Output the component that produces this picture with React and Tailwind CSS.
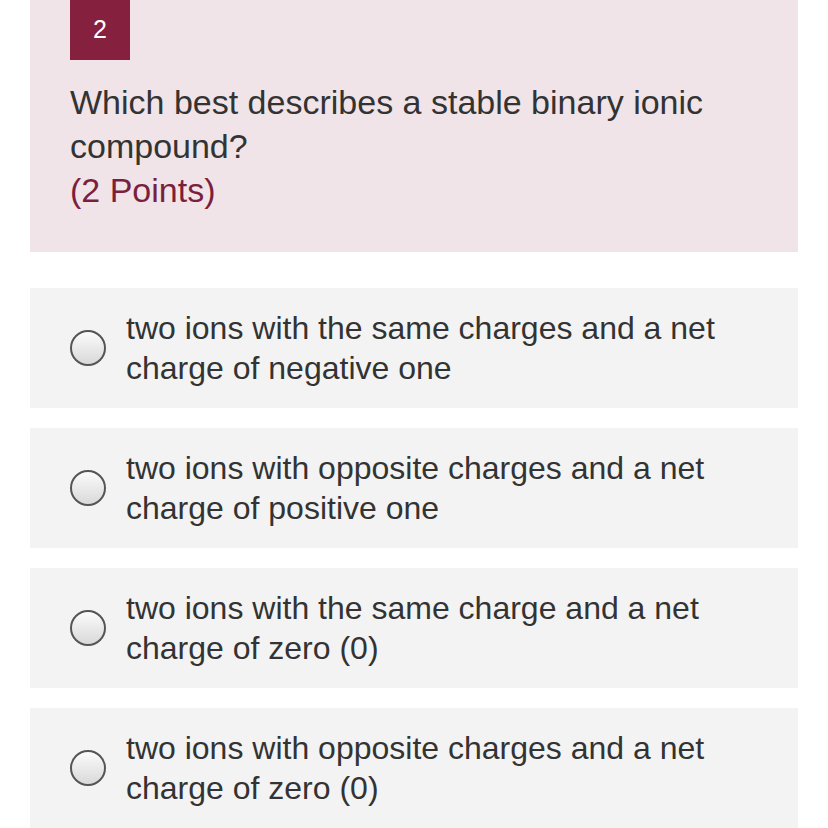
const options = [
  "two ions with the same charges and a net charge of negative one",
  "two ions with opposite charges and a net charge of positive one",
  "two ions with the same charge and a net charge of zero (0)",
  "two ions with opposite charges and a net charge of zero (0)",
];

const Radio = () => (
  <div className="w-[36px] h-[36px] shrink-0 rounded-full border-2 border-[#555] bg-gradient-to-b from-[#fbfbfb] to-[#d9d9d9]" />
);

export default function App() {
  return (
    <div className="w-[828px] h-[828px] overflow-hidden bg-white font-['Liberation_Sans',Arial,sans-serif]">
      <div className="mx-[30px] bg-[#f0e4e8] px-[40px] pb-[40px]">
        <div className="w-[60px] h-[60px] bg-[#85203f] text-white text-[25px] flex items-center justify-center">
          2
        </div>
        <div className="mt-[20px] text-[34px] leading-[44px] text-[#333]">
          <div className="pr-[40px]">Which best describes a stable binary ionic compound?</div>
          <div className="text-[#7a1f3d]">(2 Points)</div>
        </div>
      </div>

      <div className="mx-[30px] mt-[36px] flex flex-col gap-[20px]">
        {options.map((opt, i) => (
          <div key={i} className="bg-[#f3f3f3] h-[120px] pl-[40px] pr-[60px] flex items-center gap-[20px]">
            <Radio />
            <div className="text-[32px] leading-[40px] text-[#333]">{opt}</div>
          </div>
        ))}
      </div>
    </div>
  );
}
